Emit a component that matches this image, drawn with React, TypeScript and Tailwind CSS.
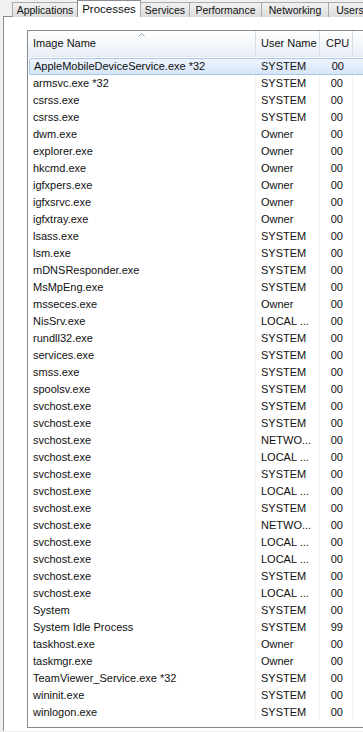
const rows: [string, string, string][] = [
  ["AppleMobileDeviceService.exe *32", "SYSTEM", "00"],
  ["armsvc.exe *32", "SYSTEM", "00"],
  ["csrss.exe", "SYSTEM", "00"],
  ["csrss.exe", "SYSTEM", "00"],
  ["dwm.exe", "Owner", "00"],
  ["explorer.exe", "Owner", "00"],
  ["hkcmd.exe", "Owner", "00"],
  ["igfxpers.exe", "Owner", "00"],
  ["igfxsrvc.exe", "Owner", "00"],
  ["igfxtray.exe", "Owner", "00"],
  ["lsass.exe", "SYSTEM", "00"],
  ["lsm.exe", "SYSTEM", "00"],
  ["mDNSResponder.exe", "SYSTEM", "00"],
  ["MsMpEng.exe", "SYSTEM", "00"],
  ["msseces.exe", "Owner", "00"],
  ["NisSrv.exe", "LOCAL ...", "00"],
  ["rundll32.exe", "SYSTEM", "00"],
  ["services.exe", "SYSTEM", "00"],
  ["smss.exe", "SYSTEM", "00"],
  ["spoolsv.exe", "SYSTEM", "00"],
  ["svchost.exe", "SYSTEM", "00"],
  ["svchost.exe", "SYSTEM", "00"],
  ["svchost.exe", "NETWO...", "00"],
  ["svchost.exe", "LOCAL ...", "00"],
  ["svchost.exe", "SYSTEM", "00"],
  ["svchost.exe", "LOCAL ...", "00"],
  ["svchost.exe", "SYSTEM", "00"],
  ["svchost.exe", "NETWO...", "00"],
  ["svchost.exe", "LOCAL ...", "00"],
  ["svchost.exe", "LOCAL ...", "00"],
  ["svchost.exe", "SYSTEM", "00"],
  ["svchost.exe", "LOCAL ...", "00"],
  ["System", "SYSTEM", "00"],
  ["System Idle Process", "SYSTEM", "99"],
  ["taskhost.exe", "Owner", "00"],
  ["taskmgr.exe", "Owner", "00"],
  ["TeamViewer_Service.exe *32", "SYSTEM", "00"],
  ["wininit.exe", "SYSTEM", "00"],
  ["winlogon.exe", "SYSTEM", "00"],
];

// tab widths read off the screenshot
const tabs: [string, string][] = [
  ["Applications", "w-[66px]"],
  ["Processes", "w-[64px]"],
  ["Services", "w-[50px]"],
  ["Performance", "w-[73px]"],
  ["Networking", "w-[68px]"],
  ["Users", "w-[44px]"],
];

export default function App() {
  return (
    <div className="w-[363px] h-[732px] overflow-hidden bg-[#f0f0f0] font-['Liberation_Sans',Arial,sans-serif] text-[11px] text-[#111]">
      {/* tab strip */}
      <div className="flex items-end h-[17px] pl-[12px] relative z-10">
        {tabs.map(([t, w]) =>
          t === "Processes" ? (
            <div key={t} className={`${w} h-[17px] pt-[1px] text-center bg-white border border-b-0 border-[#898c95] -ml-px shrink-0 text-[11.5px] leading-[14px]`}>
              {t}
            </div>
          ) : (
            <div key={t} className={`${w} h-[15px] text-center whitespace-nowrap bg-gradient-to-b from-[#f2f2f2] to-[#dcdcdc] border border-b-0 border-[#acacac] -ml-px first:ml-0 shrink-0 text-[10.5px] leading-[14px]`}>
              {t}
            </div>
          )
        )}
      </div>

      {/* tab page */}
      <div className="ml-[3px] h-[715px] -mt-px bg-white border-l border-t border-[#898c95] pl-[23px] pt-[13px]">
        <div className="h-[698px] border-l border-t border-b border-[#828790] w-[400px]">
          {/* header */}
          <div className="flex h-[26px] bg-gradient-to-b from-[#ffffff] via-[#f4f7fb] to-[#e9eef5] border-b border-[#e3e8ef]">
            <div className="w-[228px] relative border-r border-[#d5dde7] pl-[5px] flex items-center">
              <span>Image Name</span>
              <svg className="absolute left-[110px] top-[2px]" width="7" height="4" viewBox="0 0 7 4">
                <path d="M0.5 3.5 L3.5 0.5 L6.5 3.5" fill="none" stroke="#97a2b2" strokeWidth="1" />
              </svg>
            </div>
            <div className="w-[64px] border-r border-[#d5dde7] pl-[5px] flex items-center">User Name</div>
            <div className="w-[33px] border-r border-[#d5dde7] pl-[6px] flex items-center">CPU</div>
            <div className="flex-1" />
          </div>

          {/* rows */}
          <div className="pt-px">
            {rows.map(([name, user, cpu], i) => (
              <div
                key={i}
                className={
                  i === 0
                    ? "flex h-[17px] items-center ml-px border border-[#a9c6ea] rounded-[2px] bg-gradient-to-b from-[#eef4fd] to-[#d6e5f8]"
                    : "flex h-[17px] items-center"
                }
              >
                <div className={i === 0 ? "w-[226px] pl-[4px] whitespace-nowrap" : "w-[228px] pl-[5px] whitespace-nowrap border-r border-[#f2f2f2] h-full flex items-center"}>
                  {name}
                </div>
                <div className={i === 0 ? "w-[64px] pl-[5px]" : "w-[64px] pl-[5px] border-r border-[#f2f2f2] h-full flex items-center"}>
                  {user}
                </div>
                <div className={i === 0 ? "w-[33px] text-right pr-[9px]" : "w-[33px] text-right pr-[9px] border-r border-[#f2f2f2] h-full flex items-center justify-end"}>
                  {cpu}
                </div>
                <div className="flex-1" />
              </div>
            ))}
          </div>
        </div>
      </div>
    </div>
  );
}
